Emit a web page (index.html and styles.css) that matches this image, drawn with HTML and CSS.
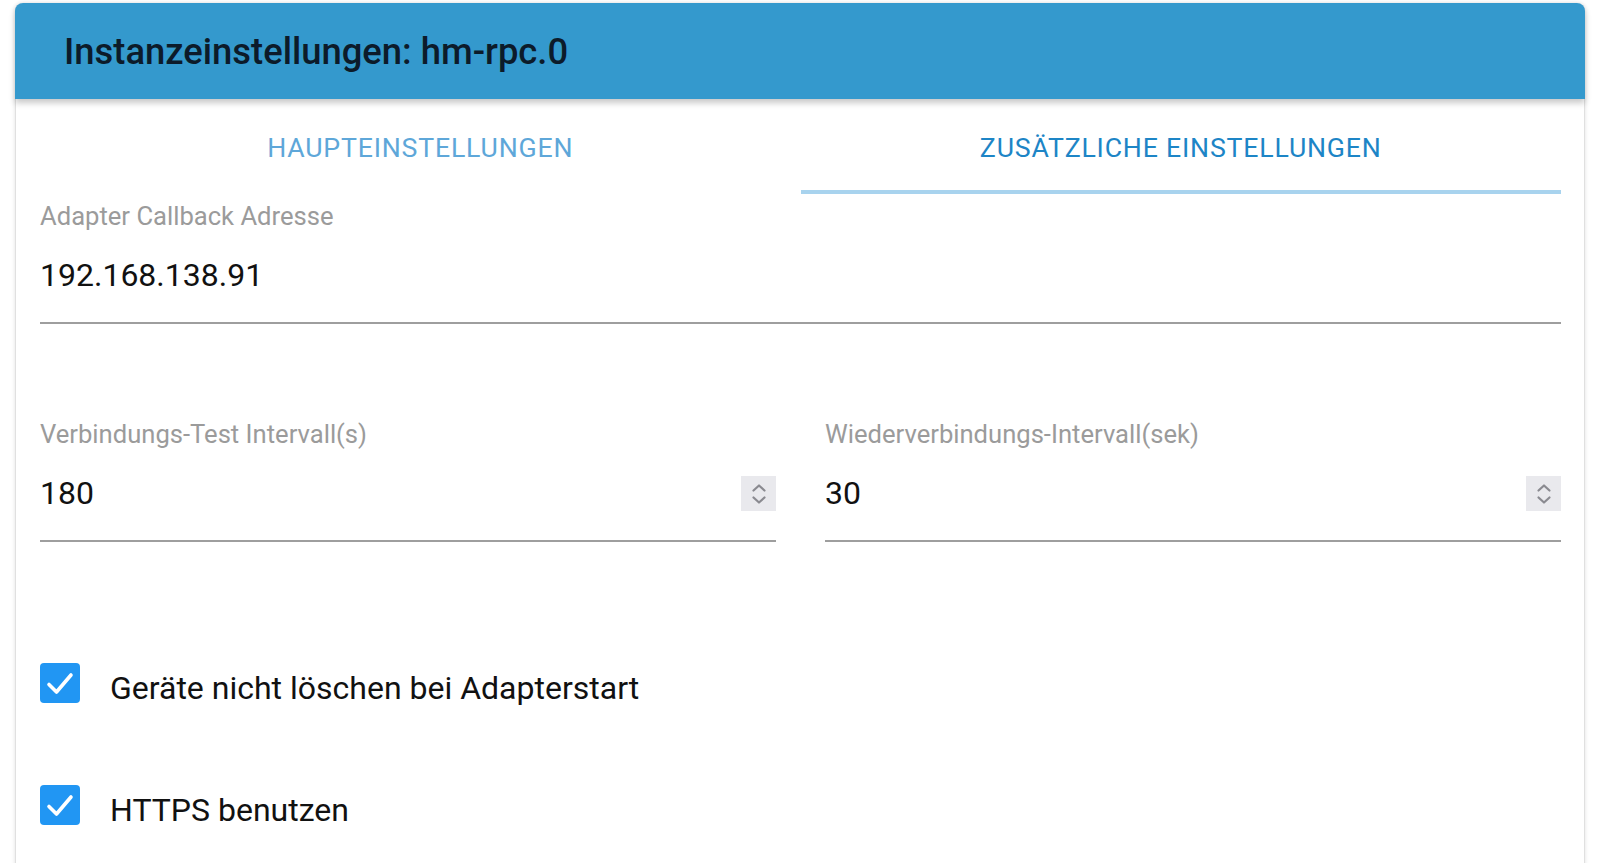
FILE: index.html
```html
<!DOCTYPE html>
<html lang="de">
<head>
<meta charset="utf-8">
<title>Instanzeinstellungen: hm-rpc.0</title>
<link rel="stylesheet" href="styles.css">
</head>
<body>
<div class="card">
  <header class="header">
    <h1 class="title">Instanzeinstellungen: hm-rpc.0</h1>
  </header>
  <nav class="tabs">
    <div class="tab">HAUPTEINSTELLUNGEN</div>
    <div class="tab active">ZUSÄTZLICHE EINSTELLUNGEN</div>
  </nav>
  <main class="content">
    <div class="field first">
      <div class="label">Adapter Callback Adresse</div>
      <div class="input"><span class="value">192.168.138.91</span></div>
    </div>
    <div class="row">
      <div class="field">
        <div class="label">Verbindungs-Test Intervall(s)</div>
        <div class="input"><span class="value">180</span>
          <span class="spin"><svg width="18" height="28" viewBox="0 0 18 28"><path d="M3.5 10.5 9 5.5l5.5 5M3.5 17.5 9 22.5l5.5-5" fill="none" stroke="#8a8a90" stroke-width="2.2" stroke-linecap="round" stroke-linejoin="round"/></svg></span>
        </div>
      </div>
      <div class="field">
        <div class="label">Wiederverbindungs-Intervall(sek)</div>
        <div class="input"><span class="value">30</span>
          <span class="spin"><svg width="18" height="28" viewBox="0 0 18 28"><path d="M3.5 10.5 9 5.5l5.5 5M3.5 17.5 9 22.5l5.5-5" fill="none" stroke="#8a8a90" stroke-width="2.2" stroke-linecap="round" stroke-linejoin="round"/></svg></span>
        </div>
      </div>
    </div>
    <label class="check first-check">
      <span class="box"><svg width="40" height="40" viewBox="0 0 40 40"><path d="M9 21.5 16.5 29 31 12" fill="none" stroke="#fff" stroke-width="3.6" stroke-linecap="round" stroke-linejoin="round"/></svg></span>
      <span class="check-text">Geräte nicht löschen bei Adapterstart</span>
    </label>
    <label class="check">
      <span class="box"><svg width="40" height="40" viewBox="0 0 40 40"><path d="M9 21.5 16.5 29 31 12" fill="none" stroke="#fff" stroke-width="3.6" stroke-linecap="round" stroke-linejoin="round"/></svg></span>
      <span class="check-text">HTTPS benutzen</span>
    </label>
  </main>
</div>
</body>
</html>
```

FILE: styles.css
```css
* { box-sizing: border-box; }
html, body { margin: 0; padding: 0; background: #fff; }
body {
  font-family: Roboto, "Noto Sans", "Liberation Sans", sans-serif;
  overflow: hidden;
  height: 863px;
}
.card {
  margin: 3px 0 0 15px;
  width: 1570px;
  min-height: 900px;
  border-left: 1px solid #e0e0e0;
  border-right: 1px solid #e0e0e0;
  background: #fff;
  box-shadow: 0 0 4px rgba(0,0,0,0.12);
  border-radius: 8px 8px 0 0;
}
.header {
  margin: 0 -1px;
  height: 96px;
  background: #3499cd;
  border-radius: 8px 8px 0 0;
  box-shadow: 0 4px 6px rgba(0,0,0,0.22);
  display: flex;
  align-items: center;
  padding-left: 49px;
  position: relative;
}
.title {
  margin: 0;
  font-size: 36.4px;
  font-weight: 500;
  color: #0c1b2a;
}
.tabs {
  display: grid;
  grid-template-columns: 1fr 1fr;
  padding: 0 23px 0 24px;
}
.tab {
  height: 95px;
  padding-top: 32px;
  line-height: 34px;
  text-align: center;
  font-size: 26.7px;
  letter-spacing: 0.8px;
  color: #5ea7d9;
  border-bottom: 4px solid transparent;
}
.tab.active {
  color: #1d85c6;
  border-bottom-color: #a8d3ee;
}
.content {
  padding: 0 23px 0 24px;
}
.field.first { margin-top: 8px; }
.label {
  font-size: 25.6px;
  line-height: 28px;
  color: #9b9b9b;
}
.input {
  margin-top: 25px;
  display: flex;
  align-items: center;
  justify-content: space-between;
  height: 40px;
  border-bottom: 2px solid #9e9e9e;
  box-sizing: content-box;
  padding-bottom: 27px;
}
.value {
  font-size: 32px;
  line-height: 40px;
  color: #111;
}
.spin {
  width: 35px;
  height: 35px;
  background: #e9e9ed;
  display: flex;
  align-items: center;
  justify-content: center;
  margin-top: 1px;
}
.row {
  display: grid;
  grid-template-columns: 1fr 1fr;
  column-gap: 49px;
  margin-top: 96px;
}
.check {
  display: flex;
  align-items: center;
  margin-top: 82px;
  height: 40px;
}
.check.first-check { margin-top: 121px; }
.box {
  width: 40px;
  height: 40px;
  border-radius: 4px;
  background: #2196f3;
  display: flex;
  flex: none;
}
.check-text {
  margin-left: 30px;
  font-size: 32px;
  line-height: 40px;
  color: #111;
  padding-top: 9px;
}
```
